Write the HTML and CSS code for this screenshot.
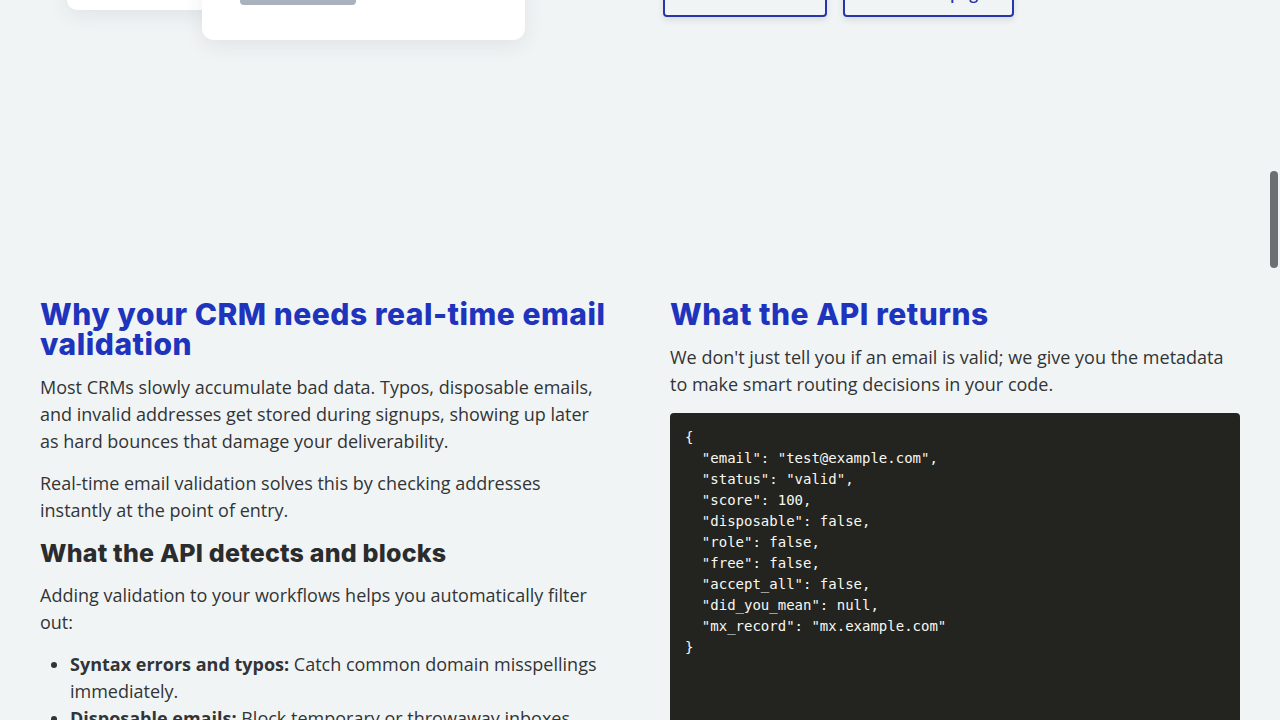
FILE: index.html
```html
<!DOCTYPE html>
<html lang="en">
<head>
<meta charset="utf-8">
<title>Email validation for CRM</title>
<link rel="stylesheet" href="styles.css">
</head>
<body>
<div class="page">
  <section class="hero">
    <div class="illustration">
      <div class="card card-back"></div>
      <div class="card card-front">
        <div class="bar"></div>
      </div>
    </div>
    <div class="actions">
      <a class="btn btn-a" href="#">Start for free</a>
      <a class="btn btn-b" href="#">View docs page</a>
    </div>
  </section>

  <main class="content">
    <div class="col">
      <h2 class="title">Why your CRM needs real-time email validation</h2>
      <p>Most CRMs slowly accumulate bad data. Typos, disposable emails, and invalid addresses get stored during signups, showing up later as hard bounces that damage your deliverability.</p>
      <p>Real-time email validation solves this by checking addresses instantly at the point of entry.</p>
      <h3 class="subtitle">What the API detects and blocks</h3>
      <p>Adding validation to your workflows helps you automatically filter out:</p>
      <ul class="list">
        <li><strong>Syntax errors and typos:</strong> Catch common domain misspellings immediately.</li>
        <li><strong>Disposable emails:</strong> Block temporary or throwaway inboxes.</li>
        <li><strong>Role-based addresses:</strong> Flag generic inboxes like info@ or admin@.</li>
      </ul>
    </div>
    <div class="col">
      <h2 class="title">What the API returns</h2>
      <p>We don't just tell you if an email is valid; we give you the metadata to make smart routing decisions in your code.</p>
      <pre class="code">{
  "email": "test@example.com",
  "status": "valid",
  "score": 100,
  "disposable": false,
  "role": false,
  "free": false,
  "accept_all": false,
  "did_you_mean": null,
  "mx_record": "mx.example.com"
}</pre>
    </div>
  </main>
</div>
<div class="scroll-thumb"></div>
</body>
</html>
```
FILE: styles.css
```css
html, body {
  margin: 0;
  padding: 0;
  overflow: hidden;
  height: 100%;
}
body {
  background: #f1f4f5;
  font-family: "Open Sans", "Noto Sans", sans-serif;
  color: #323436;
}
.page {
  max-width: 1200px;
  margin: 0 auto;
}
.hero {
  display: grid;
  grid-template-columns: 623px 1fr;
  height: 160px;
  margin-top: -120px;
}
.illustration {
  position: relative;
  height: 160px;
}
.card {
  position: absolute;
  background: #ffffff;
  border-radius: 12px;
  box-shadow: 0 6px 20px rgba(40, 50, 60, 0.08);
}
.card-back {
  left: 27px;
  top: 0;
  width: 250px;
  height: 130px;
  border-radius: 10px;
}
.card-front {
  left: 162px;
  top: 40px;
  width: 323px;
  height: 120px;
}
.bar {
  position: absolute;
  left: 38px;
  top: 75px;
  width: 116px;
  height: 10px;
  border-radius: 4px;
  background: #a9b2bc;
}
.actions {
  display: flex;
  gap: 16px;
  padding-top: 89px;
  align-items: flex-start;
}
.btn {
  box-sizing: border-box;
  height: 48px;
  display: flex;
  align-items: center;
  justify-content: center;
  border: 2px solid #2536a8;
  border-radius: 4px;
  color: #2536a8;
  text-decoration: none;
  font-size: 16px;
  font-weight: 600;
  box-shadow: 0 3px 6px rgba(30, 40, 60, 0.12);
}
.btn-a { width: 164px; }
.btn-b { width: 171px; }

.content {
  display: grid;
  grid-template-columns: 1fr 1fr;
  gap: 60px;
  padding-top: 259px;
}
.title {
  margin: 0 0 15px;
  font-family: "Inter", sans-serif;
  font-weight: 800;
  font-size: 30px;
  line-height: 30px;
  color: #1e34bd;
  letter-spacing: 0.5px;
}
p {
  margin: 0 0 15px;
  font-size: 18px;
  line-height: 27px;
}
.subtitle {
  margin: 12px 0 14px;
  font-family: "Inter", sans-serif;
  font-weight: 800;
  font-size: 25px;
  line-height: 29px;
  color: #2a2c2e;
  letter-spacing: 0.2px;
}
.list {
  margin: 0;
  padding-left: 30px;
  font-size: 18px;
  line-height: 27px;
}
.list strong { font-weight: 700; }
.code {
  margin: 0;
  background: #23241f;
  color: #f8f8f2;
  border-radius: 4px;
  padding: 14px 15px;
  font-family: "DejaVu Sans Mono", monospace;
  font-size: 14px;
  line-height: 21px;
  min-height: 320px;
}
.scroll-thumb {
  position: fixed;
  right: 2px;
  top: 171px;
  width: 8px;
  height: 97px;
  border-radius: 4px;
  background: #6d7072;
}
```
